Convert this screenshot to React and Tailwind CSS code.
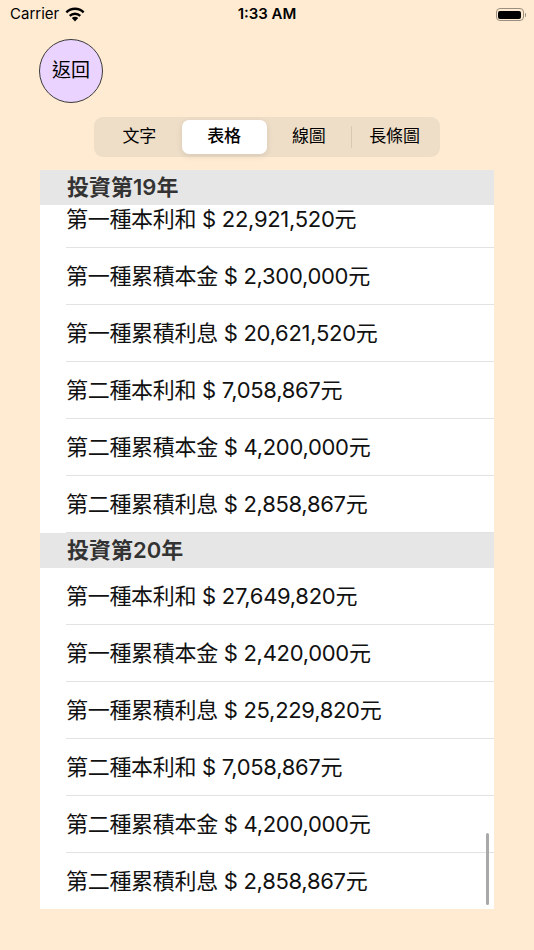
import React from 'react';

const sections = [
  {
    title: '投資第19年',
    rows: [
      '第一種本利和 $ 22,921,520元',
      '第一種累積本金 $ 2,300,000元',
      '第一種累積利息 $ 20,621,520元',
      '第二種本利和 $ 7,058,867元',
      '第二種累積本金 $ 4,200,000元',
      '第二種累積利息 $ 2,858,867元',
    ],
  },
  {
    title: '投資第20年',
    rows: [
      '第一種本利和 $ 27,649,820元',
      '第一種累積本金 $ 2,420,000元',
      '第一種累積利息 $ 25,229,820元',
      '第二種本利和 $ 7,058,867元',
      '第二種累積本金 $ 4,200,000元',
      '第二種累積利息 $ 2,858,867元',
    ],
  },
];

const tabs = ['文字', '表格', '線圖', '長條圖'];

const font = { fontFamily: "Inter, 'Noto Sans CJK TC', sans-serif" };

function Wifi() {
  return (
    <svg width="20" height="15" viewBox="0 0 20 15" className="ml-[6px]">
      <path d="M10 14.5 L6.8 11.1 A4.6 4.6 0 0 1 13.2 11.1 Z" fill="#000" />
      <path d="M3.9 8.1 A8.6 8.6 0 0 1 16.1 8.1 L14.5 9.8 A6.3 6.3 0 0 0 5.5 9.8 Z" fill="#000" />
      <path d="M0.5 4.5 A13.4 13.4 0 0 1 19.5 4.5 L17.8 6.3 A11 11 0 0 0 2.2 6.3 Z" fill="#000" />
    </svg>
  );
}

function Battery() {
  return (
    <div className="flex items-center">
      <div className="w-[28px] h-[13px] rounded-[4px] border border-[#9a8f80] p-[1.5px]">
        <div className="w-full h-full rounded-[2px] bg-black" />
      </div>
      <div className="w-[1.5px] h-[4px] rounded-r-sm bg-[#9a8f80] ml-[1px]" />
    </div>
  );
}

function Row({ text, shifted }) {
  return (
    <div className={`pl-[26px] ${shifted ? '-mt-[14px]' : ''}`}>
      <div className="h-[57px] flex items-center border-b border-[#e2e2e2] text-[22px] text-[#111] tracking-[-0.3px]">
        {text}
      </div>
    </div>
  );
}

export default function App() {
  return (
    <div className="w-[534px] h-[950px] bg-[#FFEBD2] overflow-hidden flex flex-col" style={font}>
      {/* status bar */}
      <div className="h-[28px] pl-[10px] pr-[8px] pt-[1px] flex items-center justify-between relative">
        <div className="flex items-center text-[15px] text-black">
          Carrier
          <Wifi />
        </div>
        <div className="absolute left-0 right-0 text-center text-[15px] font-semibold text-black">1:33 AM</div>
        <Battery />
      </div>

      {/* back */}
      <div className="pl-[39px] pt-[11px]">
        <button className="w-[64px] h-[64px] rounded-full bg-[#EAD4FF] border border-[#3a3a3a] text-[19px] text-black flex items-center justify-center">
          返回
        </button>
      </div>

      {/* segmented */}
      <div className="flex justify-center pt-[14px]">
        <div className="w-[346px] h-[40px] rounded-[9px] bg-[#EEDEC8] p-[3px] flex items-center">
          {tabs.map((t, i) => (
            <React.Fragment key={t}>
              {i === 3 && <div className="w-px h-[22px] bg-[#d8c9b3]" />}
              <div
                className={`flex-1 h-full flex items-center justify-center text-[17px] text-black ${
                  i === 1 ? 'bg-white rounded-[7px] font-medium shadow-[0_2px_6px_rgba(0,0,0,0.1)]' : ''
                }`}
              >
                {t}
              </div>
            </React.Fragment>
          ))}
        </div>
      </div>

      {/* list */}
      <div className="mt-[13px] ml-[40px] w-[454px] h-[739px] bg-white overflow-hidden relative">
        {sections.map((s, si) => (
          <div key={s.title}>
            <div className="relative z-10 h-[35px] bg-[#E6E6E6] pl-[27px] flex items-center text-[22px] font-semibold text-[#333]">
              {s.title}
            </div>
            {s.rows.map((r, ri) => (
              <Row key={ri} text={r} shifted={si === 0 && ri === 0} />
            ))}
          </div>
        ))}
        <div className="absolute right-[5px] top-[663px] w-[3px] h-[72px] rounded-full bg-[#a9a9a9]" />
      </div>
    </div>
  );
}
